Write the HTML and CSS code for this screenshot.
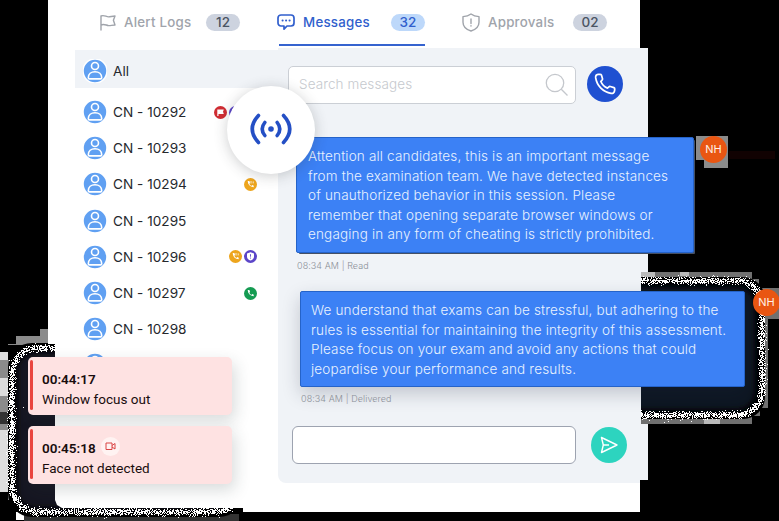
FILE: index.html
```html
<!DOCTYPE html>
<html lang="en">
<head>
<meta charset="utf-8">
<title>Messages</title>
<link rel="stylesheet" href="styles.css">
</head>
<body>
<svg class="defs" width="0" height="0">
  <defs>
    <symbol id="person" viewBox="0 0 24 24"><circle cx="12" cy="12" r="12" fill="#60a0f2"/><circle cx="12" cy="7" r="3.5"/><path d="M5.3 18.700c0-3.500 2.800-6 6.700-6s6.700 2.500 6.700 6c0 .8-.5 1.200-1.200 1.200h-11c-.7 0-1.200-.4-1.200-1.200z"/></symbol>
    <symbol id="ring" viewBox="0 0 24 24"><path d="M5.600 3.200 7.500 3c.6 0 1 .3 1.200.8l1 3.300c.1.500 0 1-.4 1.300L8.200 9.700c1 2.600 3.500 5.100 6.100 6.100l1.300-1.100c.3-.4.8-.5 1.300-.4l3.300 1c.5.200.8.600.8 1.200l-.2 1.900c-.2 1.700-1.600 2.500-3.200 2.200C10.300 19.500 4.500 13.700 3.400 6.400c-.2-1.700.5-3 2.200-3.200z"/></symbol>
    <symbol id="callbadge" viewBox="0 0 13 13"><circle cx="6.500" cy="6.500" r="6.500" fill="#eda51d"/><path d="M3.700 3.100c.2 3.700 2.200 5.700 5.900 6.100l.2-1.500-1.600-.6-.8.8c-1-.5-1.700-1.200-2.100-2.200l.8-.7-.7-1.900z" fill="#fff"/><path d="M7 3v2.500M9.200 3.400v2" stroke="#fff" stroke-width=".8"/></symbol>
    <symbol id="shieldbadge" viewBox="0 0 13 13"><circle cx="6.500" cy="6.500" r="6.500" fill="#5b45c8"/><path d="M6.500 2.200 10 3.600v2.800c0 2-1.400 3.400-3.500 4.200C4.400 9.800 3 8.400 3 6.400V3.600z" fill="#fff"/><path d="M6.500 4.200v2.500M6.500 7.600v1" stroke="#5b45c8" stroke-width=".9"/></symbol>
    <filter id="grain" x="-15%" y="-15%" width="130%" height="130%" color-interpolation-filters="sRGB">
      <feTurbulence type="fractalNoise" baseFrequency=".93" numOctaves="2" seed="4"/>
      <feColorMatrix values="0 0 0 0 1  0 0 0 0 1  0 0 0 0 1  1 0 0 0 0" result="n"/>
      <feGaussianBlur in="SourceAlpha" stdDeviation="2.800"/>
      <feComposite in2="n" operator="arithmetic" k1="0" k2=".5" k3="1" k4="-.39"/>
      <feComponentTransfer><feFuncA type="discrete" tableValues="0 1"/></feComponentTransfer>
      <feColorMatrix values="0 0 0 0 1  0 0 0 0 1  0 0 0 0 1  0 0 0 1 0"/>
    </filter>
    <filter id="soft"><feGaussianBlur stdDeviation="3"/></filter>
  </defs>
</svg>

<div class="stage">
  <svg class="backdrop" viewBox="0 0 779 521">
    <path fill="#8b8b8b" d="M696 136h32v32h-24v-8h-8z"/>
    <path fill="#707070" d="M641 272h111v7h7v9h20v31h-11v89h-8v8h-8v8H641z"/>
    <path fill="#8b8b8b" d="M8 344h8v-8h24v-7h8v16H8zM0 360h10v140H8v-8H0z"/>
    <path fill="#ddd" d="M0 352h8v8H0zM0 378h8v18H0zM0 430h8v62H0z"/>
    <path fill="#fff" d="M16 512h8v8H16z"/>
    <path fill="#b9b9b9" d="M641 272h14v5h-14zM680 272h9v4h-9zM704 419h16v5h-16z"/>
    <path fill="#333" d="M0 412h8v12H0zM24 514h215v7H24z"/>
    <path d="M729 151h46v8h-46z" fill="#110202"/>
    <rect x="560" y="277" width="205" height="142" rx="22" fill="#000"/>
    <rect x="565" y="287" width="190" height="123" rx="18" fill="#101522" filter="url(#soft)"/>
    <rect x="565" y="281" width="197" height="134" rx="24" fill="none" stroke="#fff" stroke-width="8" filter="url(#grain)"/>
    <rect x="8" y="343" width="235" height="174" rx="24" fill="#000"/>
    <rect x="17" y="352" width="220" height="156" rx="18" fill="#161720" filter="url(#soft)"/>
    <rect x="12" y="348" width="228" height="164" rx="25" fill="none" stroke="#fff" stroke-width="8" filter="url(#grain)"/>
  </svg>

  <main class="app">
    <nav class="tabs">
      <div class="tab logs">
        <svg width="16" height="17" viewBox="0 0 16 17"><path d="M1 16V2c3-1.500 5 .9 7.500.9 2.200 0 3.500-.9 6.500-.9l-1.600 4.200L15 11c-3 0-4.400.8-6.500.6C6 11.300 4 9.500 1 11"/></svg>
        <span class="name">Alert Logs</span><span class="count">12</span>
      </div>
      <div class="tab active">
        <svg width="18" height="18" viewBox="0 0 18 18"><path d="M4 2h10a3 3 0 0 1 3 3v5a3 3 0 0 1-3 3h-4l-3 3.200V13H4a3 3 0 0 1-3-3V5a3 3 0 0 1 3-3z" stroke-width="1.700"/><path d="M5.500 7.500h.2M9 7.500h.2M12.500 7.500h.2" stroke-width="1.900"/></svg>
        <span class="name">Messages</span><span class="count">32</span>
      </div>
      <div class="tab approvals">
        <svg width="18" height="19" viewBox="0 0 18 19"><path d="M9 1c2.200 1.700 4.700 2.500 8 2.600v5.700c0 4.400-3.400 7.300-8 8.700-4.600-1.400-8-4.300-8-8.700V3.600C4.300 3.500 6.800 2.700 9 1zM9 6v4.500M9 12.800v.2"/></svg>
        <span class="name">Approvals</span><span class="count">02</span>
      </div>
    </nav>

    <div class="body">
      <ul class="people">
        <li class="all"><svg class="avatar"><use href="#person"/></svg><span>All</span></li>
        <li><svg class="avatar"><use href="#person"/></svg><span>CN - 10292</span>
          <div class="flags"><svg viewBox="0 0 13 13"><circle cx="6.500" cy="6.500" r="6.500" fill="#cf2c32"/><path d="M3.300 10V3.500h6.500L9 5.700l.8 2.300H4.500v2z" fill="#fff"/></svg><svg><use href="#shieldbadge"/></svg><svg><use href="#callbadge"/></svg></div></li>
        <li><svg class="avatar"><use href="#person"/></svg><span>CN - 10293</span></li>
        <li><svg class="avatar"><use href="#person"/></svg><span>CN - 10294</span>
          <div class="flags"><svg><use href="#callbadge"/></svg></div></li>
        <li><svg class="avatar"><use href="#person"/></svg><span>CN - 10295</span></li>
        <li><svg class="avatar"><use href="#person"/></svg><span>CN - 10296</span>
          <div class="flags"><svg><use href="#callbadge"/></svg><svg><use href="#shieldbadge"/></svg></div></li>
        <li><svg class="avatar"><use href="#person"/></svg><span>CN - 10297</span>
          <div class="flags"><svg viewBox="0 0 13 13"><circle cx="6.500" cy="6.500" r="6.500" fill="#159b52"/><path d="M3.700 3.100c.2 3.700 2.200 5.700 5.900 6.100l.2-1.500-1.600-.6-.8.8c-1-.5-1.700-1.200-2.100-2.200l.8-.7-.7-1.900z" fill="#fff"/></svg></div></li>
        <li><svg class="avatar"><use href="#person"/></svg><span>CN - 10298</span></li>
        <li><svg class="avatar"><use href="#person"/></svg></li>
      </ul>

      <section class="chat">
        <div class="search-row">
          <div class="search"><span>Search messages</span>
            <svg width="24" height="24" viewBox="0 0 24 24"><circle cx="10" cy="10" r="8.700"/><path d="m16.300 16.300 6.200 6.200"/></svg></div>
          <div class="round call"><svg width="26" height="26" viewBox="0 0 24 24"><use href="#ring"/></svg></div>
        </div>
        <div class="message first"><p>Attention all candidates, this is an important message<br>from the examination team. We have detected instances<br>of unauthorized behavior in this session. Please<br>remember that opening separate browser windows or<br>engaging in any form of cheating is strictly prohibited.</p><b class="sender">NH</b></div>
        <div class="meta">08:34 AM | Read</div>
        <div class="message second"><p>We understand that exams can be stressful, but adhering to the<br>rules is essential for maintaining the integrity of this assessment.<br>Please focus on your exam and avoid any actions that could<br>jeopardise your performance and results.</p><b class="sender">NH</b></div>
        <div class="meta late">08:34 AM | Delivered</div>
        <div class="compose">
          <div class="entry"></div>
          <div class="round send"><svg width="18" height="18" viewBox="0 0 18 18"><path d="M1.500 1.500 17 9 1.500 16.500 3.300 9zM3.300 9H9"/></svg></div>
        </div>
      </section>
    </div>
  </main>

  <div class="broadcast"><svg width="42" height="34" viewBox="0 0 42 34"><circle cx="21" cy="17" r="2.800"/><path d="M14.800 10.500q-5.200 6.500 0 13M27.200 10.500q5.200 6.500 0 13M8.500 3.500q-12.500 13.500 0 27M33.500 3.500q12.500 13.500 0 27"/></svg></div>

  <aside class="alerts">
    <div class="alert"><div class="time">00:44:17</div><div>Window focus out</div></div>
    <div class="alert"><div class="time">00:45:18 <i><svg width="11" height="9" viewBox="0 0 11 9"><path d="M1 1h6v6.500H1zM7 3.500 10 1.500V7L7 5"/></svg></i></div><div>Face not detected</div></div>
  </aside>
</div>
</body>
</html>
```
FILE: styles.css
```css
* { box-sizing: border-box; }
body { margin: 0; background: #000; font-family: Inter, "Liberation Sans", sans-serif; overflow: hidden; }
svg { flex: none; fill: none; }
.defs { position: absolute; }
.stage { position: relative; width: 779px; height: 521px; overflow: hidden; background: #000; }
.backdrop { position: absolute; inset: 0; width: 779px; height: 521px; }

.app { position: relative; width: 600px; height: 512px; margin-left: 48px; }
.app::before {
  content: ""; position: absolute; inset: 0 8px 0 0; background: #fff;
  clip-path: polygon(0 0, 100% 0, 100% 508px, 14px 508px, 9px 505px, 7px 500px, 7px 344px, 0 344px);
}
.tabs { position: relative; display: flex; height: 48px; }
.tab { display: flex; align-items: center; height: 46px; padding-bottom: 2px; color: #a0a4ab; }
.tab svg { stroke: currentColor; stroke-width: 1.4; stroke-linecap: round; stroke-linejoin: round; }
.name { font-size: 13.3px; font-weight: 550; letter-spacing: .25px; margin-left: 8px; white-space: nowrap; }
.count {
  width: 34px; height: 17px; border-radius: 9px; margin-left: auto; background: #cdd3df;
  color: #4b5563; font-size: 13.5px; font-weight: 550; line-height: 17px; text-align: center;
}
.logs { width: 140px; margin-left: 52px; }
.active { width: 148px; margin-left: 37px; color: #315fcd; position: relative; }
.active::after { content: ""; position: absolute; left: 2px; right: 0; bottom: 0; height: 2px; background: #3563cf; }
.active .count { background: #bdd8fa; color: #315fcd; }
.approvals { width: 145px; margin-left: 37px; }

.body { position: relative; display: flex; }
.people { list-style: none; width: 203px; margin: 2px 0 0 27px; padding: 0; height: 430px; }
.people li { display: flex; align-items: center; height: 36.2px; padding: 0 21px 0 8px; gap: 6px; font-size: 13.6px; letter-spacing: .02px; color: #25282d; }
.people .all { height: 38px; margin-bottom: 6px; background: #f0f3f7; padding-top: 3px; }
.avatar { width: 24px; height: 24px; stroke: #fff; stroke-width: 1.600; }
.flags { display: flex; gap: 2px; margin-left: auto; }
.flags svg { width: 13px; height: 13px; }

.chat { position: relative; width: 370px; height: 435px; padding: 18px 0 0 10px; }
.chat::before {
  content: ""; position: absolute; inset: 0; background: #f0f3f7; border-radius: 0 0 0 8px;
  clip-path: polygon(0 0, 370px 0, 370px 224px, 363px 224px, 363px 376px, 370px 376px, 370px 432px, 362px 432px, 362px 435px, 0 435px);
}
.chat::after { content: ""; position: absolute; left: -35px; right: 8px; top: 460px; height: 4px; background: #fff; }
.chat > * { position: relative; }
.search-row, .compose { display: flex; align-items: center; }
.search { display: flex; align-items: center; justify-content: space-between; width: 288px; height: 38px; padding: 0 6px 0 10px; border: 1px solid #cbcfd5; border-radius: 5px; background: #fff; color: #c6c9ce; font-size: 13.5px; font-weight: 300; letter-spacing: .1px; }
.search span { margin-top: -2px; }
.search svg { stroke: #c4c7cc; stroke-width: 1.300; }
.round { display: grid; place-items: center; width: 36px; height: 36px; border-radius: 50%; }
.call { margin: -2px 0 0 11px; background: #1f50d1; }
.call svg { stroke: #fff; stroke-width: 1.600; }
.message { background: #3c81f5; border: 1px solid #2563c9; border-radius: 2px; color: #e8f2ff; font-size: 13.5px; font-weight: 300; line-height: 19.5px; letter-spacing: .17px; white-space: nowrap; }
.message p { margin: 0; }
.first { width: 398px; height: 116px; margin: 33px 0 0 8px; padding: 9px 11px; box-shadow: 2px 2px 0 -1px #455064; }
.second { width: 445px; height: 96px; margin: 19px 0 0 12px; padding: 9px 10px; box-shadow: 0 7px 18px #1f2b4038; }
.meta { height: 19px; margin: 0 0 0 9px; padding-top: 6px; font-size: 9px; line-height: 13px; color: #8b9098; font-weight: 300; letter-spacing: .08px; }
.late { margin-left: 13px; padding-top: 5px; }
.sender { position: absolute; width: 27px; height: 27px; border-radius: 50%; background: #e95612; color: #fff1e6; font: 400 11px/27px Inter, sans-serif; text-align: center; letter-spacing: 0; }
.first .sender { top: -2px; left: 403px; }
.second .sender { top: -3px; left: 452px; }
.compose { margin: 20px 0 0 4px; }
.entry { width: 284px; height: 38px; border: 1px solid #9da3b0; border-radius: 6px; background: #fff; }
.send { margin-left: 15px; background: #2dd4bf; }
.send svg { stroke: #fff; stroke-width: 1.400; stroke-linejoin: round; }

.broadcast { position: absolute; left: 227px; top: 86px; width: 88px; height: 88px; border-radius: 50%; background: #fff; box-shadow: 0 2px 14px #3031353d; display: grid; place-items: center; }
.broadcast svg { stroke: #244fc5; stroke-width: 3.600; stroke-linecap: round; margin-top: -2px; }
.broadcast circle { fill: #244fc5; stroke: none; }

.alerts { position: absolute; left: 28px; top: 357px; width: 204px; display: grid; gap: 11px; font: 13.5px/20px Roboto, sans-serif; color: #190d0e; }
.alert { position: relative; height: 58px; padding: 12px 14px; border-radius: 5px; background: #fee2e2; box-shadow: 3px 6px 16px #28383a2e; }
.alert::before { content: ""; position: absolute; left: 2px; top: 3px; bottom: 5px; width: 3px; border-radius: 2px; background: #e9453f; }
.time { display: flex; align-items: center; height: 20px; font-weight: 600; }
.time i { display: grid; place-items: center; width: 19px; height: 19px; margin: -3px 0 0 5px; border-radius: 50%; background: #fff3f2; }
.time svg { stroke: #da4545; stroke-width: 1; }
```
